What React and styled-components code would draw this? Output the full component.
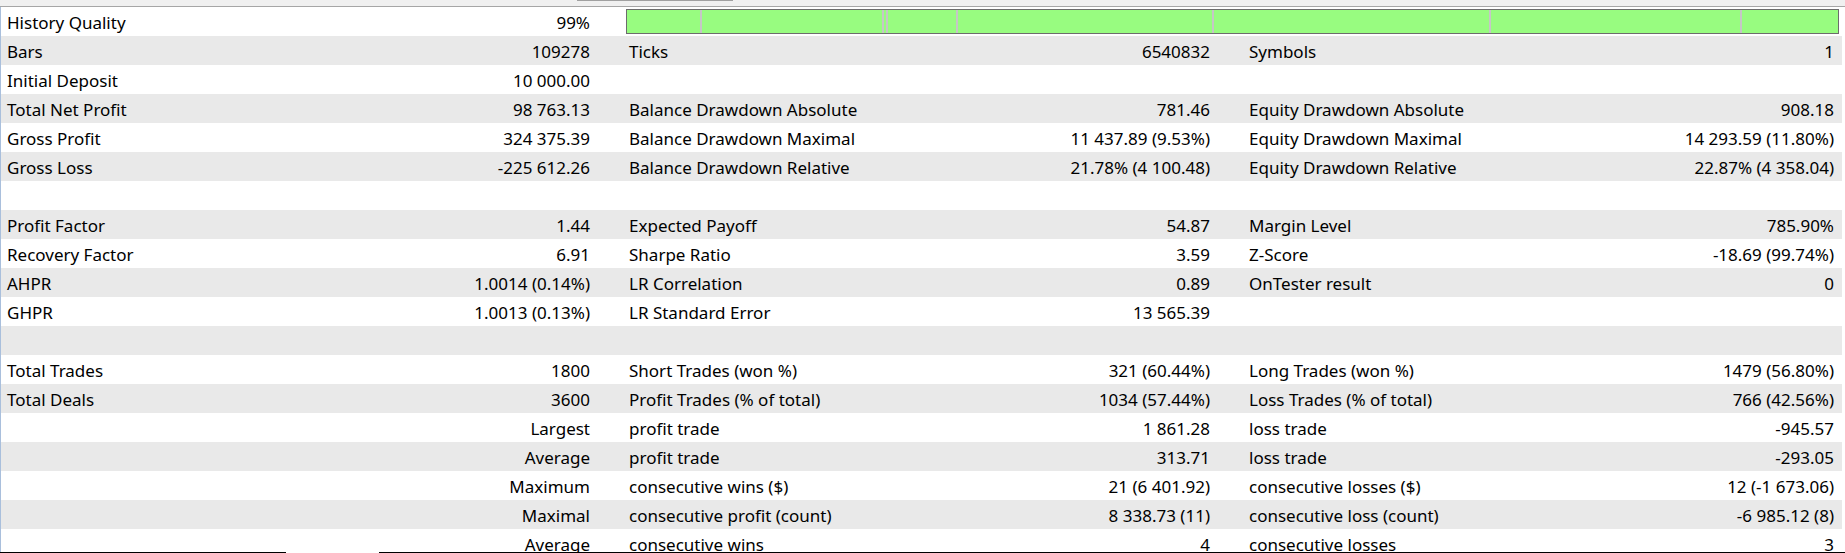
import React from "react";
import styled, { createGlobalStyle } from "styled-components";

const GlobalStyle = createGlobalStyle`
  html, body {
    margin: 0;
    padding: 0;
    background: #ffffff;
  }
  body {
    font-family: "Noto Sans", "Open Sans", sans-serif;
    font-size: 17px;
    color: #000;
  }
`;

const Page = styled.div`
  display: flex;
  flex-direction: column;
  width: 1845px;
  height: 553px;
  overflow: hidden;
  background: #ffffff;
`;

const TopStrip = styled.div`
  flex: 0 0 auto;
  height: 6px;
  background: #f0f0f0;
  border-bottom: 1px solid #a6a6a6;
`;

const Thumb = styled.div`
  margin-left: 577px;
  width: 156px;
  height: 1px;
  background: #a0a0a0;
`;

const Table = styled.div`
  flex: 1 1 auto;
  min-height: 0;
  overflow: hidden;
  width: 1841px;
  border-left: 1px solid #a9bfdc;
`;

const Row = styled.div`
  display: grid;
  grid-template-columns: 299px 324px 306px 314px 296px 302px;
  height: 29px;
  background: ${(p) => (p.$shade ? "#e9e9e9" : "#ffffff")};
`;

const Cell = styled.div`
  box-sizing: border-box;
  height: 29px;
  padding-top: 2px;
  line-height: 27px;
  white-space: nowrap;
  overflow: hidden;
`;

const Label = styled(Cell)`
  padding-left: ${(p) => (p.$first ? 6 : 5)}px;
`;

const Value = styled(Cell)`
  text-align: right;
  padding-right: ${(p) => (p.$last ? 8 : 34)}px;
`;

const QualityBar = styled.div`
  grid-column: 3 / 7;
  display: flex;
  box-sizing: border-box;
  height: 25px;
  margin: 2px 3px 0 2px;
  border: 1px solid #6c6c6c;
  background: #98fc80;
`;

const Segment = styled.div`
  box-sizing: border-box;
  flex: ${(p) => (p.$w ? `0 0 ${p.$w}px` : "1 1 auto")};
  border-left: ${(p) => (p.$sep ? "2px solid #c6c6c6" : "none")};
`;

const BottomEdge = styled.div`
  flex: 0 0 auto;
  display: flex;
  height: 1px;
  background: #ffffff;
`;

const EdgeLine = styled.div`
  height: 1px;
  background: #000;
  flex: ${(p) => (p.$w ? `0 0 ${p.$w}px` : "1 1 auto")};
`;

const EdgeGap = styled.div`
  flex: 0 0 ${(p) => p.$w}px;
`;

const segments = [73, 182, 4, 70, 256, 277, 251, 0];

const rows = [
  ["Bars", "109278", "Ticks", "6540832", "Symbols", "1"],
  ["Initial Deposit", "10 000.00", "", "", "", ""],
  ["Total Net Profit", "98 763.13", "Balance Drawdown Absolute", "781.46", "Equity Drawdown Absolute", "908.18"],
  ["Gross Profit", "324 375.39", "Balance Drawdown Maximal", "11 437.89 (9.53%)", "Equity Drawdown Maximal", "14 293.59 (11.80%)"],
  ["Gross Loss", "-225 612.26", "Balance Drawdown Relative", "21.78% (4 100.48)", "Equity Drawdown Relative", "22.87% (4 358.04)"],
  ["", "", "", "", "", ""],
  ["Profit Factor", "1.44", "Expected Payoff", "54.87", "Margin Level", "785.90%"],
  ["Recovery Factor", "6.91", "Sharpe Ratio", "3.59", "Z-Score", "-18.69 (99.74%)"],
  ["AHPR", "1.0014 (0.14%)", "LR Correlation", "0.89", "OnTester result", "0"],
  ["GHPR", "1.0013 (0.13%)", "LR Standard Error", "13 565.39", "", ""],
  ["", "", "", "", "", ""],
  ["Total Trades", "1800", "Short Trades (won %)", "321 (60.44%)", "Long Trades (won %)", "1479 (56.80%)"],
  ["Total Deals", "3600", "Profit Trades (% of total)", "1034 (57.44%)", "Loss Trades (% of total)", "766 (42.56%)"],
  ["", "Largest", "profit trade", "1 861.28", "loss trade", "-945.57"],
  ["", "Average", "profit trade", "313.71", "loss trade", "-293.05"],
  ["", "Maximum", "consecutive wins ($)", "21 (6 401.92)", "consecutive losses ($)", "12 (-1 673.06)"],
  ["", "Maximal", "consecutive profit (count)", "8 338.73 (11)", "consecutive loss (count)", "-6 985.12 (8)"],
  ["", "Average", "consecutive wins", "4", "consecutive losses", "3"],
];

export default function App() {
  return (
    <Page>
      <GlobalStyle />
      <TopStrip>
        <Thumb />
      </TopStrip>
      <Table>
        <Row>
          <Label $first>History Quality</Label>
          <Value>99%</Value>
          <QualityBar>
            {segments.map((w, i) => (
              <Segment key={i} $w={w} $sep={i > 0} />
            ))}
          </QualityBar>
        </Row>
        {rows.map((r, i) => (
          <Row key={i} $shade={i % 2 === 0}>
            <Label $first>{r[0]}</Label>
            <Value>{r[1]}</Value>
            <Label>{r[2]}</Label>
            <Value>{r[3]}</Value>
            <Label>{r[4]}</Label>
            <Value $last>{r[5]}</Value>
          </Row>
        ))}
      </Table>
      <BottomEdge>
        <EdgeLine $w={286} />
        <EdgeGap $w={93} />
        <EdgeLine />
      </BottomEdge>
    </Page>
  );
}
